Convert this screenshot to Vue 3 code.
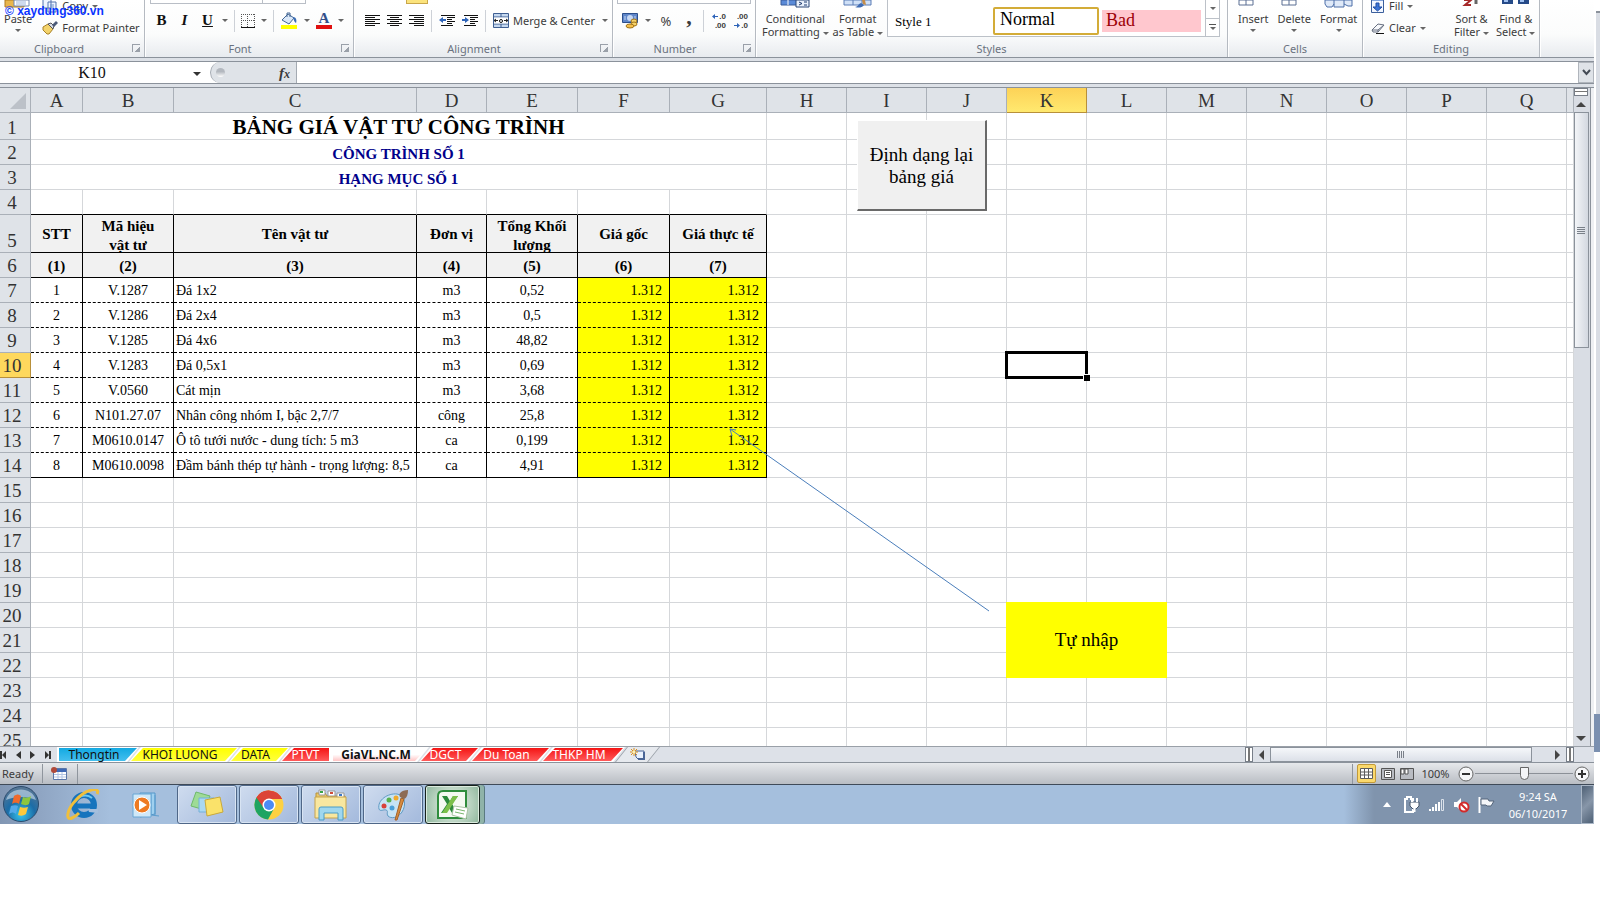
<script setup>
import { ref } from "vue";

const columns = [
    { name: 'A', width: 52 },
    { name: 'B', width: 91 },
    { name: 'C', width: 243 },
    { name: 'D', width: 70 },
    { name: 'E', width: 91 },
    { name: 'F', width: 92 },
    { name: 'G', width: 97 },
    ...'HIJKLMNOPQ'.split('').map((name) => ({ name, width: 80 })),
];
const freeColumns = columns.slice(7);

const titles = ['BẢNG GIÁ VẬT TƯ CÔNG TRÌNH', 'CÔNG TRÌNH SỐ 1', 'HẠNG MỤC SỐ 1'];
const headings = ['STT', 'Mã hiệu vật tư', 'Tên vật tư', 'Đơn vị', 'Tổng Khối lượng', 'Giá gốc', 'Giá thực tế'];

const materials = [
    ['1', 'V.1287', 'Đá 1x2', 'm3', '0,52', '1.312', '1.312'],
    ['2', 'V.1286', 'Đá 2x4', 'm3', '0,5', '1.312', '1.312'],
    ['3', 'V.1285', 'Đá 4x6', 'm3', '48,82', '1.312', '1.312'],
    ['4', 'V.1283', 'Đá 0,5x1', 'm3', '0,69', '1.312', '1.312'],
    ['5', 'V.0560', 'Cát mịn', 'm3', '3,68', '1.312', '1.312'],
    ['6', 'N101.27.07', 'Nhân công nhóm I, bậc 2,7/7', 'công', '25,8', '1.312', '1.312'],
    ['7', 'M0610.0147', 'Ô tô tưới nước - dung tích: 5 m3', 'ca', '0,199', '1.312', '1.312'],
    ['8', 'M0610.0098', 'Đầm bánh thép tự hành - trọng lượng: 8,5', 'ca', '4,91', '1.312', '1.312'],
];

const sheets = [
    { name: 'Thongtin', color: 'cyan', width: 82 },
    { name: 'KHOI LUONG', color: 'yellow', width: 110 },
    { name: 'DATA', color: 'yellow', width: 61 },
    { name: 'PTVT', color: 'red cut', width: 51 },
    { name: 'GiaVL.NC.M', color: 'active', width: 98 },
    { name: 'DGCT', color: 'red', width: 61 },
    { name: 'Du Toan', color: 'red', width: 81 },
    { name: 'THKP HM', color: 'red', width: 84 },
];

const cellName = ref('K10');
const formula = ref('');
const zoom = ref(50);
</script>

<template>
    <div class="screen">
        <div class="workspace">
            <main class="window">
                <div class="ribbon">
                    <section class="group clipboard">
                        <div class="tools">
                            <button class="big paste">
                                <svg width="28" height="12" viewBox="0 0 28 12"><path d="M1 0h19v7H1z" fill="#e9b64d" stroke="#b07b22"/><path d="M10 0h15v6H10z" fill="#fff" stroke="#7186ad"/><path d="M12 2h10M12 4h10" stroke="#9eb6dc"/></svg>
                                <span>Paste</span><i class="caret"></i>
                            </button>
                            <div class="stack">
                                <button class="line">
                                    <svg width="16" height="14" viewBox="0 0 16 14"><path d="M1 0h8v9H1zM6 3h8v10H6z" fill="#edf4ff" stroke="#5475ad"/><path d="M8 6h4M8 8h4M8 10h4" stroke="#6d92cb"/></svg>
                                    <span>Copy</span><i class="caret"></i>
                                </button>
                                <button class="line">
                                    <svg width="16" height="14" viewBox="0 0 16 14"><path d="M1 6l5-3 5 5-4 5-2 0-4-4z" fill="#f3d36b" stroke="#a98227"/><path d="M6 3l3-1 3 3-1 3z" fill="#d9dde6" stroke="#555"/><path d="M10 4l4-4 2 2-4 4z" fill="#4b5a78"/></svg>
                                    <span>Format Painter</span>
                                </button>
                            </div>
                        </div>
                        <footer><span>Clipboard</span><i class="launcher"></i></footer>
                    </section>

                    <section class="group font">
                        <div class="clipped"><i class="box wide"></i><i class="box narrow"></i></div>
                        <div class="tools row">
                            <button class="letter bold" aria-label="Bold">B</button>
                            <button class="letter italic" aria-label="Italic">I</button>
                            <button class="letter under" aria-label="Underline">U</button><i class="caret"></i>
                            <i class="sep"></i>
                            <button aria-label="Borders"><svg width="14" height="14" viewBox="0 0 14 14"><path d="M0 .5h14M0 6.500h14M.5 0v13M6.500 0v13M13.500 0v13" stroke="#555" stroke-dasharray="1 1" fill="none"/><path d="M0 13.500h14" stroke="#111"/></svg></button><i class="caret"></i>
                            <i class="sep"></i>
                            <button aria-label="Fill color"><svg width="18" height="17" viewBox="0 0 18 17"><path d="M2 8l6-6 6 4-5 6z" fill="#dbe8f8" stroke="#426694"/><path d="M7 5V1h3v4" fill="none" stroke="#426694"/><path d="M13 5c3 0 4 3 3 6-2-1-2-3-3-6z" fill="#3a6db5"/><path d="M1 13h16v4H1z" fill="#ff0"/></svg></button><i class="caret"></i>
                            <button class="font-color" aria-label="Font color"><span>A</span></button><i class="caret"></i>
                        </div>
                        <footer><span>Font</span><i class="launcher"></i></footer>
                    </section>

                    <section class="group alignment">
                        <div class="clipped"><i class="pressed"></i></div>
                        <div class="tools row">
                            <button aria-label="Align left"><svg width="15" height="13" viewBox="0 0 15 13"><path d="M0 1.500h15M0 3.500h10M0 5.500h15M0 7.500h10M0 9.500h15M0 11.500h10" stroke="#111"/></svg></button>
                            <button aria-label="Center"><svg width="15" height="13" viewBox="0 0 15 13"><path d="M0 1.500h15M3 3.500h9M0 5.500h15M3 7.500h9M0 9.500h15M3 11.500h9" stroke="#111"/></svg></button>
                            <button aria-label="Align right"><svg width="15" height="13" viewBox="0 0 15 13"><path d="M0 1.500h15M5 3.500h10M0 5.500h15M5 7.500h10M0 9.500h15M5 11.500h10" stroke="#111"/></svg></button>
                            <i class="sep"></i>
                            <button aria-label="Decrease indent"><svg width="16" height="14" viewBox="0 0 16 14"><path d="M2 1.500h14M8 3.500h8M8 5.500h5M8 7.500h8M8 9.500h5M2 11.500h12" stroke="#111"/><path d="M0 6l4-3v2h3v2H4v2z" fill="#2d63b8"/></svg></button>
                            <button aria-label="Increase indent"><svg width="16" height="14" viewBox="0 0 16 14"><path d="M2 1.500h14M8 3.500h8M8 5.500h5M8 7.500h8M8 9.500h5M2 11.500h12" stroke="#111"/><path d="M7 6L3 3v2H0v2h3v2z" fill="#2d63b8"/></svg></button>
                            <i class="sep"></i>
                            <button class="line merge">
                                <svg width="16" height="15" viewBox="0 0 16 15"><path d="M.5.5h15v14H.5z" fill="#c5d8ef" stroke="#3f5f92"/><path d="M0 4h16M0 11h16M8 0v4M8 11v4" stroke="#3f5f92"/><path d="M1 4.500h14v6H1z" fill="#fff"/><path d="M1 7.500h4M15 7.500h-4M3 6L1 7.500 3 9M13 6l2 1.500L13 9" stroke="#222" fill="none"/><circle cx="8" cy="8" r="1.500" fill="none" stroke="#111"/></svg>
                                <span>Merge &amp; Center</span><i class="caret"></i>
                            </button>
                        </div>
                        <footer><span>Alignment</span><i class="launcher"></i></footer>
                    </section>

                    <section class="group number">
                        <div class="clipped"><i class="box full"></i></div>
                        <div class="tools row">
                            <button aria-label="Accounting format"><svg width="17" height="16" viewBox="0 0 17 16"><path d="M.5.5h15v9H.5z" fill="#5f86c9" stroke="#2c4f8d"/><circle cx="8" cy="5" r="3" fill="#c8d9f4"/><path d="M3 3v4M13 3v4" stroke="#c8d9f4"/><ellipse cx="12" cy="8" rx="3" ry="2" fill="#f6d36a" stroke="#a0731a"/><ellipse cx="12" cy="11" rx="3" ry="2" fill="#f6d36a" stroke="#a0731a"/><ellipse cx="8" cy="13" rx="4" ry="2" fill="#f6c04a" stroke="#a0731a"/></svg></button><i class="caret"></i>
                            <button class="percent" aria-label="Percent">%</button>
                            <button class="comma" aria-label="Comma">,</button>
                            <i class="sep"></i>
                            <button class="decimals" aria-label="Increase decimal"><span><svg width="6" height="5" viewBox="0 0 6 5"><path d="M0 2.500L3 0v2h3v1H3v2z" fill="#2d63b8"/></svg>.0</span><span>.00</span></button>
                            <button class="decimals" aria-label="Decrease decimal"><span>.00</span><span><svg width="6" height="5" viewBox="0 0 6 5"><path d="M6 2.500L3 0v2H0v1h3v2z" fill="#2d63b8"/></svg>.0</span></button>
                        </div>
                        <footer><span>Number</span><i class="launcher"></i></footer>
                    </section>

                    <section class="group styles">
                        <div class="tools">
                            <button class="big">
                                <svg width="30" height="12" viewBox="0 0 30 12"><path d="M1 0h20v5H1z" fill="#5b8bd8" stroke="#3a5c9a"/><path d="M8 0v5" stroke="#fff"/><path d="M16 0h13v7H16z" fill="#e9f0fb" stroke="#2b4777"/><path d="M19 2l3 1.500L19 5M24 2h3M24 5h3" stroke="#1d3a6e" fill="none"/></svg>
                                <span>Conditional</span><span>Formatting <i class="caret"></i></span>
                            </button>
                            <button class="big">
                                <svg width="30" height="12" viewBox="0 0 30 12"><path d="M1 0h27v5H1z" fill="#cfe0f7" stroke="#5b7db5"/><path d="M10 0v5M19 0v5" stroke="#5b7db5"/><path d="M12 7c3 0 3-3 6-4l3 2c-2 3-6 3-9 2z" fill="#3f6cb4"/><path d="M19 0l3 0 1 5-3-1z" fill="#c58d4a"/></svg>
                                <span>Format</span><span>as Table <i class="caret"></i></span>
                            </button>
                            <div class="gallery">
                                <button class="style-one">Style 1</button>
                                <button class="style-normal">Normal</button>
                                <button class="style-bad">Bad</button>
                                <div class="gallery-scroll">
                                    <button aria-label="Next styles"><i class="caret"></i></button>
                                    <button aria-label="More styles"><i class="bar"></i><i class="caret"></i></button>
                                </div>
                            </div>
                        </div>
                        <footer><span>Styles</span></footer>
                    </section>

                    <section class="group cells">
                        <div class="tools">
                            <button class="big"><svg width="30" height="12" viewBox="0 0 30 12"><path d="M1 0v5h14V0M8 0v5M1 0h14" fill="#fff" stroke="#5b6f93"/></svg><span>Insert</span><i class="caret"></i></button>
                            <button class="big"><svg width="30" height="12" viewBox="0 0 30 12"><path d="M3 0v5h14V0M10 0v5M3 0h14" fill="#fff" stroke="#5b6f93"/></svg><span>Delete</span><i class="caret"></i></button>
                            <button class="big"><svg width="30" height="12" viewBox="0 0 30 12"><path d="M1 0v4l2 3h5l2-3v3h10V4l4 2h4V0z" fill="#dfe9f8" stroke="#4c6ea8"/><path d="M10 0v4M20 0v4" stroke="#4c6ea8"/></svg><span>Format</span><i class="caret"></i></button>
                        </div>
                        <footer><span>Cells</span></footer>
                    </section>

                    <section class="group editing">
                        <div class="tools">
                            <div class="stack">
                                <button class="line">
                                    <svg width="14" height="14" viewBox="0 0 14 14"><path d="M.5 0h12v13.500H.5z" fill="#f1f6ff" stroke="#3b5f9c"/><path d="M1 0h11v2H1z" fill="#7fa2db"/><path d="M5 4h3v4h3l-4.500 4L2 8h3z" fill="#3b74d6" stroke="#1e4da3"/></svg>
                                    <span>Fill</span><i class="caret"></i>
                                </button>
                                <button class="line">
                                    <svg width="14" height="14" viewBox="0 0 14 14"><path d="M1 9l6-6 6 1-6 7H2z" fill="#f7f9fc" stroke="#666f80"/><path d="M1 9l6 0 6-5M7 9v2" stroke="#666f80" fill="none"/><path d="M5 12.500h8" stroke="#111"/></svg>
                                    <span>Clear</span><i class="caret"></i>
                                </button>
                            </div>
                            <button class="big"><svg width="26" height="12" viewBox="0 0 26 12"><path d="M6 0h7l-6 5h6" fill="none" stroke="#a52828" stroke-width="2"/><path d="M18 0v4" stroke="#666" stroke-width="3"/></svg><span>Sort &amp;</span><span>Filter <i class="caret"></i></span></button>
                            <button class="big"><svg width="30" height="12" viewBox="0 0 30 12"><path d="M1 0h11v4H1zM17 0h11v4H17z" fill="#254a88"/><path d="M3 1h4M19 1h4" stroke="#9fc0f0" stroke-width="2"/></svg><span>Find &amp;</span><span>Select <i class="caret"></i></span></button>
                        </div>
                        <footer><span>Editing</span></footer>
                    </section>
                </div>

                <div class="formula-bar">
                    <input v-model="cellName" class="name-box" aria-label="Name box">
                    <button class="name-drop" aria-label="Names"><i class="caret dark"></i></button>
                    <div class="fx-area"><i class="knob"></i><button class="fx" aria-label="Insert function"><i>f</i><sub>x</sub></button></div>
                    <input v-model="formula" class="formula" aria-label="Formula">
                    <button class="expand" aria-label="Expand formula bar"><svg width="9" height="7" viewBox="0 0 9 7"><path d="M1 1l3.500 4L8 1" fill="none" stroke="#444b55" stroke-width="2"/></svg></button>
                </div>

                <div class="sheet-area">
                    <div class="sheet">
                        <table>
                            <colgroup>
                                <col class="head-col">
                                <col v-for="c in columns" :key="c.name" :style="{ width: c.width + 'px' }">
                                <col>
                            </colgroup>
                            <thead>
                                <tr>
                                    <th class="corner"><svg width="17" height="17" viewBox="0 0 17 17"><path d="M16 0v16H0z" fill="#bcc1c8"/></svg></th>
                                    <th v-for="c in columns" :key="c.name" :class="{ picked: c.name === 'K' }">{{ c.name }}</th>
                                    <th></th>
                                </tr>
                            </thead>
                            <tbody>
                                <tr v-for="(title, i) in titles" :key="title" :class="{ tall: i === 0 }">
                                    <th>{{ i + 1 }}</th>
                                    <td colspan="7" :class="i === 0 ? 'title' : 'subtitle'">{{ title }}</td>
                                    <td v-for="c in freeColumns" :key="c.name"></td>
                                    <td></td>
                                </tr>
                                <tr class="above">
                                    <th>4</th>
                                    <td v-for="c in columns" :key="c.name"></td>
                                    <td></td>
                                </tr>
                                <tr class="headings">
                                    <th>5</th>
                                    <td v-for="h in headings" :key="h" class="boxed heading"><div>{{ h }}</div></td>
                                    <td v-for="c in freeColumns" :key="c.name"></td>
                                    <td></td>
                                </tr>
                                <tr>
                                    <th>6</th>
                                    <td v-for="n in 7" :key="n" class="boxed heading">({{ n }})</td>
                                    <td v-for="c in freeColumns" :key="c.name"></td>
                                    <td></td>
                                </tr>
                                <tr v-for="(row, i) in materials" :key="row[0]">
                                    <th :class="{ picked: i === 3 }">{{ i + 7 }}</th>
                                    <td v-for="(value, j) in row" :key="j" class="boxed" :class="{ dotted: i < 7, name: j === 2, price: j > 4 }">{{ value }}</td>
                                    <td v-for="c in freeColumns" :key="c.name"></td>
                                    <td></td>
                                </tr>
                                <tr v-for="n in 11" :key="n">
                                    <th>{{ n + 14 }}</th>
                                    <td v-for="c in columns" :key="c.name"></td>
                                    <td></td>
                                </tr>
                            </tbody>
                        </table>
                        <button class="macro">Định dạng lại bảng giá</button>
                        <svg class="arrow" width="262" height="186" viewBox="0 0 262 186"><path d="M1 1L260 183M7 2L1 1l2 7" fill="none" stroke="#4a7ebb"/></svg>
                        <div class="note">Tự nhập</div>
                        <div class="cursor"></div>
                    </div>
                    <div class="v-scroll">
                        <i class="split"></i>
                        <button aria-label="Scroll up"><i class="tri up"></i></button>
                        <div class="v-thumb"><i></i></div>
                        <span class="space"></span>
                        <button aria-label="Scroll down"><i class="tri down"></i></button>
                    </div>
                </div>

                <div class="tab-bar">
                    <nav class="tab-nav">
                        <button aria-label="First sheet"><svg width="7" height="8" viewBox="0 0 7 8"><path d="M0 0h2v8H0zM6 0v8L2 4z"/></svg></button>
                        <button aria-label="Previous sheet"><svg width="5" height="8" viewBox="0 0 5 8"><path d="M5 0v8L0 4z"/></svg></button>
                        <button aria-label="Next sheet"><svg width="5" height="8" viewBox="0 0 5 8"><path d="M0 0v8l5-4z"/></svg></button>
                        <button aria-label="Last sheet"><svg width="7" height="8" viewBox="0 0 7 8"><path d="M5 0h2v8H5zM1 0v8l4-4z"/></svg></button>
                    </nav>
                    <div class="tabs">
                        <button v-for="s in sheets" :key="s.name" class="tab" :class="s.color" :style="{ width: s.width + 'px' }"><span>{{ s.name }}</span></button>
                        <button class="tab new" aria-label="Insert sheet"><svg width="16" height="13" viewBox="0 0 16 13"><path d="M5 3h9v8H8l-2-2z" fill="#e9f1fd" stroke="#4a6596"/><path d="M8 11h6V4" fill="none" stroke="#4a6596" stroke-width="2"/><path d="M4 0v8M0 4h8M1 1l6 6M7 1L1 7" stroke="#d98f1e"/><circle cx="4" cy="4" r="1.500" fill="#fff3b0"/></svg></button>
                    </div>
                    <div class="h-scroll">
                        <i class="grip"></i>
                        <button aria-label="Scroll left"><i class="tri left"></i></button>
                        <div class="h-track"><div class="h-thumb"><i></i></div></div>
                        <button aria-label="Scroll right"><i class="tri right"></i></button>
                        <i class="grip"></i>
                    </div>
                </div>

                <div class="status">
                    <span class="ready">Ready</span>
                    <button class="macro-rec" aria-label="Record macro"><svg width="16" height="13" viewBox="0 0 16 13"><path d="M2.500 1.500h13v11h-13z" fill="#fff" stroke="#5b77a8"/><path d="M3 2h12v3H3z" fill="#3f69b5"/><path d="M3 7.500h12M3 10h12M7 5v7M11 5v7" stroke="#b3c5e4"/><circle cx="3" cy="3" r="3" fill="#b04a3a"/></svg></button>
                    <span class="space"></span>
                    <div class="views">
                        <button class="on" aria-label="Normal view"><svg width="13" height="11" viewBox="0 0 13 11"><path d="M.5.500h12v10H.5zM.5 4h12M.5 7h12M4.500.5v10M8.500.5v10" fill="#fff" stroke="#5c5c5c"/></svg></button>
                        <button aria-label="Page layout"><svg width="14" height="12" viewBox="0 0 14 12"><path d="M.5.5h13v11H.5z" fill="#b9bcc2" stroke="#555"/><path d="M3.500 2.500h7v7h-7z" fill="#fff" stroke="#555"/><path d="M5 4.500h4M5 6.500h4" stroke="#555"/></svg></button>
                        <button aria-label="Page break preview"><svg width="14" height="12" viewBox="0 0 14 12"><path d="M.5.5h13v11H.5z" fill="#b9bcc2" stroke="#555"/><path d="M1 1h3v5H1zM5 1h3v5H5z" fill="#fff" stroke="#555"/></svg></button>
                    </div>
                    <span class="percent-text">100%</span>
                    <button class="round" aria-label="Zoom out"><svg width="16" height="16" viewBox="0 0 16 16"><circle cx="8" cy="8" r="7" fill="#f6f7f9" stroke="#666"/><path d="M4 8h8" stroke="#333" stroke-width="2"/></svg></button>
                    <input v-model="zoom" type="range" class="zoom" aria-label="Zoom">
                    <button class="round" aria-label="Zoom in"><svg width="16" height="16" viewBox="0 0 16 16"><circle cx="8" cy="8" r="7" fill="#f6f7f9" stroke="#666"/><path d="M4 8h8M8 4v8" stroke="#333" stroke-width="2"/></svg></button>
                </div>

                <div class="taskbar">
                    <button class="start" aria-label="Start">
                        <svg width="36" height="37" viewBox="0 0 36 37"><defs><radialGradient id="orb" cx=".5" cy=".8" r=".8"><stop offset="0" stop-color="#35c5ee"/><stop offset=".5" stop-color="#1c6ca6"/><stop offset="1" stop-color="#5c7894"/></radialGradient></defs><circle cx="18" cy="18" r="17.500" fill="url(#orb)" stroke="#2b4b6d"/><path d="M3 14C7 0 29 0 33 14 24 10 12 10 3 14z" fill="#d2e1ee" opacity=".6"/><path d="M11 10c3-2 5-2 7 0l-2 8c-3-2-5-1-7 0z" fill="#ef6a2c"/><path d="M20 11c3 1 5 1 8-1l-2 8c-3 2-5 1-8 0z" fill="#8cc63e"/><path d="M8 20c3-1 5-1 7 0l-2 8c-2-2-4-2-7 0z" fill="#52a9ea"/><path d="M17 21c3 1 5 1 8 0l-2 7c-3 2-5 2-8 1z" fill="#fcc93b"/></svg>
                    </button>
                    <button class="pinned" aria-label="Internet Explorer">
                        <svg width="34" height="32" viewBox="0 0 34 32"><circle cx="18" cy="16" r="10" fill="none" stroke="#1774bd" stroke-width="6"/><path d="M10 17h19" stroke="#1774bd" stroke-width="5"/><path d="M22 20h10v4l-9-1z" fill="#a5bfdd"/><path d="M9 13c3-6 11-9 17-4" fill="none" stroke="#6ec9f1" stroke-width="2"/><path d="M31 5C35-3 20 0 10 11 1 20-1 32 6 29c3-1 5-3 7-5" fill="none" stroke="#f0bf3c" stroke-width="3"/></svg>
                    </button>
                    <button class="pinned player" aria-label="Media Player">
                        <svg width="28" height="26" viewBox="0 0 28 26"><path d="M8 1h15v21l-15 3z" fill="#9fd0ef" stroke="#5596c9"/><path d="M19 1v22l8 1M23 3v20" stroke="#5b9dce" fill="none"/><path d="M1 2h18v23H1z" fill="#cfe8f8" stroke="#69a6d4"/><circle cx="10" cy="13" r="8" fill="#ee7a22" stroke="#fff"/><path d="M7 8l8 5-8 5z" fill="#fff"/></svg>
                    </button>
                    <button class="task" aria-label="Sticky Notes">
                        <svg width="34" height="28" viewBox="0 0 34 28"><path d="M6 1l14 4-5 14L1 15z" fill="#9edb96" stroke="#6fb96b"/><path d="M9 7h15v14H9z" fill="#a9d8f2" stroke="#74b0d8"/><path d="M15 9l15-3 3 15-16 4z" fill="#fae26a" stroke="#c9a93a"/></svg>
                    </button>
                    <button class="task" aria-label="Chrome">
                        <svg width="30" height="30" viewBox="0 0 30 30"><circle cx="15" cy="15" r="14.500" fill="#fdd142"/><path d="M15 15L2.500 7.500A14.500 14.500 0 0 1 28 9H15z" fill="#dc4437"/><path d="M15 15L2.500 7.500A14.500 14.500 0 0 0 14 29.500l6-11z" fill="#1da462"/><path d="M2.500 7.500A14.500 14.500 0 0 1 28 9H15l-6 8z" fill="#dc4437"/><circle cx="15" cy="15" r="6.500" fill="#fff"/><circle cx="15" cy="15" r="5" fill="#4c8bf5"/></svg>
                    </button>
                    <button class="task" aria-label="Explorer">
                        <svg width="34" height="32" viewBox="0 0 34 32"><path d="M2 4h9l2 3h18v21H2z" fill="#e9c765" stroke="#b8923a"/><path d="M5 1h6v5H5zM14 2h7v5h-7zM23 4h7v5h-7z" fill="#fff" stroke="#999"/><path d="M6 3h3" stroke="#37a447" stroke-width="2"/><path d="M16 4h3" stroke="#d04a38" stroke-width="2"/><path d="M25 6h3" stroke="#3b77c9" stroke-width="2"/><path d="M1 8h31v21H1z" fill="#f8e7a0" stroke="#c6a34c"/><path d="M5 31V20q0-2 2-2h20q2 0 2 2v11h-5v-7H10v7z" fill="#9fd7ee" stroke="#4b9cc6"/></svg>
                    </button>
                    <button class="task" aria-label="Paint">
                        <svg width="34" height="32" viewBox="0 0 34 32"><path d="M3 20C1 11 12 4 21 5c9 1 9 12 5 18-4 6-11 7-14 4-2-3 1-5-2-6-2-1-6 2-7-1z" fill="#c7e3f5" stroke="#5f9ac4"/><circle cx="8" cy="17" r="2.500" fill="#d8413a"/><circle cx="13" cy="11" r="2.500" fill="#58b14c"/><circle cx="20" cy="9" r="2.500" fill="#f0a92c"/><circle cx="16" cy="19" r="2.500" fill="#4b9fd9"/><path d="M19 31l6-22 3 1-7 21z" fill="#d98b3d" stroke="#a2622a"/><path d="M24 8c-2-3 1-7 8-7 0 4-1 8-4 9z" fill="#8d6b55"/></svg>
                    </button>
                    <button class="task open" aria-label="Excel">
                        <svg width="32" height="30" viewBox="0 0 32 30"><path d="M1 6q0-5 5-5h23v27H1z" fill="#f4faf1" stroke="#2f8d3d" stroke-width="2"/><path d="M5 6h5l3 5 3-5h5l-6 8 6 9h-6l-3-5-3 5H4l6-9z" fill="#2b8a3a"/><path d="M16 6h5L10 23H5z" fill="#7cc04b"/><path d="M17 16l14 2-2 11-14-4z" fill="#fff" stroke="#a8c3a4"/><path d="M19 19l9 2M18 22l9 2" stroke="#79b56d"/></svg>
                    </button>
                    <span class="space"></span>
                    <div class="tray">
                        <svg width="10" height="6" viewBox="0 0 10 6"><path d="M5 0l4 5H1z" fill="#fff"/></svg>
                        <svg width="16" height="18" viewBox="0 0 16 18"><path d="M1 3h2V1h4v2h2v13H1z" fill="none" stroke="#fff" stroke-width="2"/><path d="M6 6h9v4l-3 3H9L6 10z" fill="#fff" stroke="#46566c"/><path d="M8 2v4M13 2v4M10.500 12v4" stroke="#fff" stroke-width="2"/></svg>
                        <svg width="17" height="14" viewBox="0 0 17 14"><path d="M1 11h2v2H1zM4 9h2v4H4zM7 6h2v7H7zM10 4h2v9h-2z" fill="#fff"/><path d="M13.500 1.500h2v11h-2z" fill="none" stroke="#dbe2eb"/></svg>
                        <svg width="17" height="16" viewBox="0 0 17 16"><path d="M1 5h3l4-4v13l-4-4H1z" fill="#fff"/><circle cx="11" cy="10" r="4.500" fill="#fff" stroke="#d22a2a" stroke-width="2"/><path d="M8 7l6 6" stroke="#d22a2a" stroke-width="2"/></svg>
                        <svg width="17" height="16" viewBox="0 0 17 16"><path d="M1.500 0v16" stroke="#fff" stroke-width="2"/><path d="M3 2h7l1 2h5l-3 5H9L8 8H3z" fill="#f4f6f9" stroke="#55657a"/></svg>
                    </div>
                    <div class="clock"><span>9:24 SA</span><span>06/10/2017</span></div>
                    <button class="desktop" aria-label="Show desktop"></button>
                </div>
            </main>
            <aside class="behind"><div class="behind-panel"></div><div class="behind-end"></div></aside>
        </div>
        <div class="watermark">© xaydung360.vn</div>
    </div>
</template>

<style>
body {
    margin: 0;
    background: #fff;
}
</style>

<style scoped>
* {
    box-sizing: border-box;
}
.screen {
    position: relative;
    height: 100vh;
    padding-bottom: 76px;
    overflow: hidden;
    font-family: "Noto Sans", "Open Sans", sans-serif;
    font-size: 11px;
    color: #3b3b3b;
}
.workspace {
    display: flex;
    height: 100%;
}
.window {
    flex: 1;
    min-width: 0;
    display: flex;
    flex-direction: column;
    background: #dde1e7;
}
button {
    flex: none;
    padding: 0;
    border: 0;
    background: none;
    font: inherit;
    color: inherit;
}
svg {
    display: block;
    flex: none;
}
input {
    border: 0;
    outline: 0;
    margin: 0;
    padding: 0;
    font: inherit;
    background: none;
}
.space {
    flex: 1;
}
.caret {
    display: inline-block;
    flex: none;
    border: 3px solid transparent;
    border-top-color: #666;
    border-bottom: 0;
    vertical-align: middle;
}
.caret.dark {
    border-width: 4px 4px 0;
    border-top-color: #333;
}

/* ribbon */
.ribbon {
    flex: none;
    display: flex;
    height: 58px;
    background: linear-gradient(#fff, #fbfcfc 60%, #e8ebef);
    border-bottom: 1px solid #8b929b;
}
.group {
    flex: none;
    display: flex;
    flex-direction: column;
    border-right: 1px solid #b5bac1;
    box-shadow: 1px 0 #fff;
}
.clipboard { width: 145px; }
.font { width: 209px; }
.alignment { width: 259px; }
.number { width: 143px; }
.styles { width: 472px; }
.cells { width: 135px; }
.editing { width: 177px; }
.group footer {
    display: flex;
    align-items: center;
    height: 18px;
    padding: 0 4px;
    color: #6a7280;
}
.group footer span {
    flex: 1;
    text-align: center;
}
.font footer span, .alignment footer span, .number footer span {
    padding-right: 10px;
}
.clipboard footer span {
    padding-right: 18px;
}
.launcher {
    width: 8px;
    height: 8px;
    border-top: 1px solid #9aa0a9;
    border-left: 1px solid #9aa0a9;
    background: linear-gradient(135deg, transparent 60%, #9aa0a9 60%);
}
.tools {
    flex: 1;
    min-height: 0;
    display: flex;
}
.row {
    align-items: center;
    padding-bottom: 2px;
}
.sep {
    width: 1px;
    height: 22px;
    background: #cdd1d7;
}
.clipped {
    flex: none;
    display: flex;
    height: 4px;
}
.box {
    border: 1px solid #b9bec6;
    border-top: 0;
    background: #fff;
}
.box.wide { width: 113px; margin-left: 5px; }
.box.narrow { width: 43px; border-left: 0; }
.box.full { flex: 1; margin: 0 4px; }
.pressed {
    width: 22px;
    margin-left: 52px;
    background: #fbe37c;
    border: 1px solid #c9a64a;
    border-top: 0;
}
.big {
    display: flex;
    flex-direction: column;
    align-items: center;
    line-height: 13px;
    white-space: nowrap;
}
.big > .caret {
    margin-top: 4px;
}
.line {
    display: flex;
    align-items: center;
    gap: 4px;
    height: 22px;
    line-height: 16px;
    white-space: nowrap;
}
.stack {
    display: flex;
    flex-direction: column;
    justify-content: flex-end;
}
.clipboard .tools {
    gap: 10px;
    padding-left: 4px;
}
.clipboard .stack, .editing .stack {
    margin-top: -4px;
}
.font .row {
    gap: 6px;
    padding-left: 8px;
}
.letter {
    width: 17px;
    font-family: "Liberation Serif", serif;
    font-size: 15px;
    color: #111;
}
.letter.bold { font-weight: bold; }
.letter.italic { font-style: italic; font-weight: bold; }
.letter.under { font-weight: bold; text-decoration: underline; }
.font-color {
    width: 16px;
    height: 17px;
    border-bottom: 4px solid #e01010;
    font-family: "Liberation Serif", serif;
    font-size: 15px;
    line-height: 13px;
    font-weight: bold;
    color: #33508a;
}
.alignment .row {
    gap: 7px;
    padding-left: 11px;
}
.merge .caret {
    margin-left: 3px;
}
.number .row {
    gap: 6px;
    padding-left: 9px;
}
.percent {
    width: 18px;
    font-size: 13px;
}
.comma {
    width: 16px;
    font-family: "Liberation Serif", serif;
    font-size: 22px;
    font-weight: bold;
    line-height: 12px;
    padding-bottom: 8px;
}
.decimals {
    width: 16px;
    display: flex;
    flex-direction: column;
    align-items: flex-end;
    font-family: "Liberation Sans", sans-serif;
    font-size: 8px;
    line-height: 9px;
    font-weight: bold;
}
.decimals span {
    display: flex;
    align-items: center;
    gap: 1px;
}
.styles .tools {
    gap: 4px;
    padding-left: 6px;
}
.gallery {
    flex: 1;
    display: flex;
    height: 37px;
    margin-right: 7px;
    border: 1px solid #bcc1c8;
    border-top: 0;
    background: #fff;
    font-family: "Liberation Serif", serif;
    color: #000;
    text-align: left;
}
.gallery > button {
    text-align: left;
}
.style-one {
    width: 105px;
    padding: 7px 0 0 7px;
    font-size: 13px;
}
.style-normal {
    width: 106px;
    height: 28px;
    margin-top: 7px;
    padding: 0 0 4px 5px;
    border: 2px solid #d3ac38;
    border-radius: 2px;
    font-size: 18px;
}
.gallery > .style-bad {
    flex: 1;
    height: 22px;
    margin: 10px 4px 0 3px;
    padding: 0 0 4px 4px;
    background: #ffc7ce;
    color: #9c0006;
    font-size: 18px;
}
.gallery-scroll {
    width: 14px;
    display: flex;
    flex-direction: column;
    border-left: 1px solid #bcc1c8;
}
.gallery-scroll button {
    flex: 1;
    display: flex;
    flex-direction: column;
    align-items: center;
    justify-content: center;
    gap: 2px;
}
.gallery-scroll button + button {
    border-top: 1px solid #bcc1c8;
}
.gallery-scroll .bar {
    width: 7px;
    height: 1px;
    background: #555;
}
.cells .tools {
    gap: 9px;
    padding-left: 10px;
}
.editing .tools {
    padding-left: 8px;
    gap: 7px;
}
.editing .stack {
    width: 76px;
}

/* formula bar */
.formula-bar {
    flex: none;
    display: flex;
    height: 23px;
    margin-top: 3px;
    border-top: 1px solid #8b929b;
    border-bottom: 1px solid #8b929b;
    background: #fff;
}
.name-box {
    width: 184px;
    text-align: center;
    font-family: "Liberation Serif", serif;
    font-size: 16px;
    color: #111;
}
.name-drop {
    width: 26px;
}
.fx-area {
    width: 87px;
    display: flex;
    align-items: center;
    justify-content: space-between;
    padding: 0 6px 0 5px;
    border: 1px solid #a4aab2;
    border-width: 0 1px;
    border-radius: 11px 0 0 11px;
    background: #dfe3e8;
}
.knob {
    width: 9px;
    height: 9px;
    border-radius: 5px;
    background: linear-gradient(#b3b8bf 40%, #fff);
}
.fx {
    font-family: "Liberation Serif", serif;
    font-size: 15px;
    font-weight: bold;
    line-height: 18px;
}
.fx sub {
    font-size: 12px;
    font-style: italic;
    line-height: 1px;
    vertical-align: baseline;
}
.formula {
    flex: 1;
}
.expand {
    width: 16px;
    display: flex;
    align-items: center;
    justify-content: center;
    border: 1px solid #b0b5bc;
    background: #dfe3e8;
}

/* grid */
.sheet-area {
    flex: 1;
    min-height: 0;
    display: flex;
    margin-top: 3px;
    border-top: 1px solid #8b929b;
}
.sheet {
    position: relative;
    flex: 1;
    min-width: 0;
    overflow: hidden;
    background: #fff;
}
table {
    width: 100%;
    table-layout: fixed;
    border-collapse: separate;
    border-spacing: 0;
    font-family: "Liberation Serif", serif;
    font-size: 14px;
    color: #000;
}
.head-col {
    width: 31px;
}
tr {
    height: 25px;
}
tr.tall {
    height: 27px;
}
tr.headings {
    height: 38px;
}
th, td {
    padding: 2px 0 0;
    line-height: 18px;
    overflow: hidden;
    white-space: nowrap;
    border-right: 1px solid #d5d7da;
    border-bottom: 1px solid #d5d7da;
    text-align: center;
}
th {
    border-color: #aab0b8;
    background: #dfe3e8;
    font-size: 19px;
    font-weight: normal;
    color: #333;
}
tbody th {
    padding-right: 6px;
    vertical-align: bottom;
    line-height: 22px;
}
th.corner {
    padding: 2px 0 0 10px;
}
th.picked {
    background: linear-gradient(#fdd257, #ffe96f);
    border-color: #b8903a;
}
tbody th.picked {
    background: #fed85d;
}
.title {
    font-size: 21px;
    font-weight: bold;
    line-height: 22px;
}
.subtitle {
    padding-top: 4px;
    font-size: 15px;
    font-weight: bold;
    color: #00008b;
}
.above td:nth-child(-n + 8) {
    border-bottom-color: #000;
}
td.boxed {
    border-color: #000;
}
td.dotted {
    border-bottom-style: dashed;
}
.heading {
    background: #f1f1f1;
    font-size: 15px;
    font-weight: bold;
}
.heading div {
    max-height: 35px;
    padding: 0 8px;
    line-height: 19px;
    white-space: normal;
    overflow: hidden;
}
td.name {
    padding-left: 2px;
    text-align: left;
}
td.price {
    padding-right: 7px;
    text-align: right;
    background: #ff0;
}
.macro {
    position: absolute;
    left: 857px;
    top: 32px;
    width: 130px;
    height: 91px;
    padding: 2px 10px 0;
    background: #f0f0f0;
    border: 1px solid #fff;
    border-right: 2px solid #696969;
    border-bottom: 2px solid #696969;
    font-family: "Liberation Serif", serif;
    font-size: 19px;
    line-height: 22px;
    color: #000;
}
.arrow {
    position: absolute;
    left: 729px;
    top: 340px;
}
.note {
    position: absolute;
    left: 1006px;
    top: 514px;
    width: 161px;
    height: 76px;
    display: flex;
    align-items: center;
    justify-content: center;
    background: #ff0;
    font-family: "Liberation Serif", serif;
    font-size: 19px;
    color: #000;
}
.cursor {
    position: absolute;
    left: 1005px;
    top: 263px;
    width: 83px;
    height: 28px;
    border: 3px solid #000;
}
.cursor::after {
    content: "";
    position: absolute;
    right: -5px;
    bottom: -5px;
    width: 6px;
    height: 6px;
    background: #000;
    border: 1px solid #fff;
    border-width: 1px 0 0 1px;
}

/* scroll bars */
.v-scroll {
    width: 20px;
    display: flex;
    flex-direction: column;
    align-items: center;
    padding-right: 3px;
    border-right: 3px solid #eef0f3;
    background: #d9dde4;
    box-shadow: inset -1px 0 #8b929b;
}
.v-scroll button {
    height: 16px;
}
.split {
    width: 14px;
    height: 8px;
    border: 1px solid #777e88;
    background: linear-gradient(#fff 40%, #777 40%, #777 55%, #fff 55%);
}
.v-thumb {
    width: 15px;
    height: 236px;
    display: flex;
    align-items: center;
    justify-content: center;
    border: 1px solid #8b929b;
    background: linear-gradient(90deg, #f3f5f8, #d3d8e0);
}
.v-thumb i {
    width: 8px;
    height: 7px;
    background: repeating-linear-gradient(#7a8089 0 1px, transparent 1px 2px);
}
.tri {
    display: block;
    border: 5px solid transparent;
}
.tri.up { border-top: 0; border-bottom-color: #444; }
.tri.down { border-bottom: 0; border-top-color: #444; }
.tri.left { border-left: 0; border-right-color: #444; }
.tri.right { border-right: 0; border-left-color: #444; }

/* sheet tabs */
.tab-bar {
    flex: none;
    display: flex;
    height: 17px;
    padding-right: 20px;
    border-top: 1px solid #9aa0a8;
    border-bottom: 1px solid #8b929b;
    background: #dde1e8;
}
.tab-nav {
    width: 57px;
    display: flex;
    align-items: center;
    gap: 9px;
    fill: #333;
}
.tabs {
    flex: 1;
    display: flex;
}
.tab {
    position: relative;
    margin-left: -10px;
    height: 15px;
    font-family: "Noto Sans", sans-serif;
    font-size: 12px;
    line-height: 14px;
    color: #111;
    white-space: nowrap;
}
.tab::before, .tab::after {
    content: "";
    position: absolute;
    inset: 0;
    background: #fff;
    clip-path: polygon(12px 0, 100% 0, calc(100% - 12px) 100%, 0 100%);
}
.tab::after {
    inset: 1px 2px;
}
.tab span, .tab svg {
    position: relative;
    z-index: 1;
}
.tab span {
    padding-right: 8px;
}
.tab svg {
    margin: 0 auto;
}
.tab:first-child {
    margin-left: 0;
}
.cyan::before, .cyan::after {
    clip-path: polygon(0 0, 100% 0, calc(100% - 12px) 100%, 0 100%);
}
.cyan::after { background: linear-gradient(#12a9e2, #45bfee); }
.yellow::after { background: linear-gradient(#ff0, #ffff3c); }
.red::after { background: linear-gradient(#f41414, #ff5a5a); }
.red { color: #fff; }
.cut span { padding-right: 0; }
.cut::before, .cut::after {
    clip-path: polygon(12px 0, 100% 0, 100% 100%, 0 100%);
}
.active {
    margin-left: 0;
    font-weight: bold;
    z-index: 1;
}
.active::before, .active::after {
    clip-path: polygon(0 0, 100% 0, calc(100% - 12px) 100%, 0 100%);
}
.active::after { background: linear-gradient(#fff 50%, #ffc4c4); }
.new { width: 45px; }
.new::before { background: #9aa0a8; }
.new::after { inset: 0 1px; background: #e6e9ee; }
.h-scroll {
    flex: none;
    width: 329px;
    display: flex;
    align-items: center;
}
.grip {
    width: 8px;
    height: 15px;
    border: 1px solid #777e88;
    background: linear-gradient(90deg, #fff 40%, #777 40%, #777 60%, #fff 60%);
}
.h-scroll button {
    width: 17px;
    display: flex;
    justify-content: center;
}
.h-track {
    flex: 1;
    height: 15px;
    padding-right: 17px;
}
.h-thumb {
    height: 100%;
    display: flex;
    align-items: center;
    justify-content: center;
    border: 1px solid #8b929b;
    background: linear-gradient(#f5f7fa, #dce0e8);
}
.h-thumb i {
    width: 8px;
    height: 7px;
    background: repeating-linear-gradient(90deg, #7a8089 0 1px, transparent 1px 2px);
}

/* status bar */
.status {
    flex: none;
    display: flex;
    align-items: center;
    height: 22px;
    padding-right: 3px;
    border-bottom: 1px solid #3f4a58;
    background: linear-gradient(#e6e8eb, #cfd2d7 50%, #b9bdc3);
}
.ready {
    width: 43px;
    padding-left: 2px;
    line-height: 19px;
    border-right: 1px solid #8f959d;
}
.macro-rec {
    width: 35px;
    height: 20px;
    padding-left: 8px;
    border-right: 1px solid #8f959d;
}
.views {
    display: flex;
    align-items: center;
    gap: 5px;
    height: 20px;
    padding-left: 4px;
    border-left: 1px solid #8f959d;
}
.views .on {
    padding: 3px 2px;
    border: 1px solid #c29a3a;
    border-radius: 2px;
    background: #fbd96c;
}
.percent-text {
    width: 43px;
    text-align: center;
}
.zoom {
    appearance: none;
    width: 98px;
    height: 14px;
    background: linear-gradient(transparent 6px, #8b9097 6px, #8b9097 7px, transparent 7px);
}
.zoom::-webkit-slider-thumb {
    appearance: none;
    width: 9px;
    height: 13px;
    background: #f4f5f7;
    border: 1px solid #666;
    border-radius: 0 0 5px 5px;
}
.round {
    margin: 0 1px;
}

/* taskbar */
.taskbar {
    flex: none;
    display: flex;
    align-items: center;
    height: 39px;
    background: linear-gradient(90deg, #8196b3, #8fa5c3 40px, #a5bfdd 110px, #a5bfdd calc(100% - 250px), #8094ad calc(100% - 220px), #8094ad);
}
.start {
    width: 36px;
    margin-left: 3px;
}
.pinned {
    width: 34px;
    margin-left: 27px;
}
.pinned.player {
    width: 28px;
    margin-left: 32px;
    margin-right: 17px;
}
.task {
    width: 60px;
    height: 39px;
    margin-right: 2px;
    display: flex;
    align-items: center;
    justify-content: center;
    border: 1px solid #4f6788;
    border-radius: 3px;
    background: linear-gradient(135deg, #cfdcef, #a3b9dc);
    box-shadow: inset 0 0 0 1px #d8e4f3;
}
.task.open {
    width: 55px;
    border-color: #16221c;
    background: radial-gradient(circle at 50% 50%, #f1f8f0, #8eb69c);
    box-shadow: inset 0 0 0 1px #dcebdf, 4px 0 #8fb3a8, 5px 0 #5a7a80;
}
.tray {
    display: flex;
    align-items: center;
    gap: 8px;
}
.tray svg:first-child {
    margin-right: 4px;
}
.clock {
    width: 86px;
    display: flex;
    flex-direction: column;
    align-items: center;
    line-height: 17px;
    color: #fff;
}
.desktop {
    width: 13px;
    height: 39px;
    border: 1px solid #a9b6c6;
    background: linear-gradient(135deg, #4e6075, #8796a9 50%, #4e6075);
}

/* edge of the window behind */
.behind {
    flex: none;
    width: 6px;
    display: flex;
    flex-direction: column;
    padding-top: 11px;
}
.behind-panel {
    flex: 1;
    margin-left: 2px;
    border-top: 2px solid #8b929b;
    background: #d9dde4;
}
.behind-end {
    height: 38px;
    margin-bottom: 72px;
    background: #7b90b0;
}
.watermark {
    position: absolute;
    left: 5px;
    top: 2px;
    font-family: "Liberation Sans Narrow", "Liberation Sans", sans-serif;
    font-size: 12px;
    line-height: 18px;
    font-weight: bold;
    color: #0a35ff;
    white-space: nowrap;
}
</style>
